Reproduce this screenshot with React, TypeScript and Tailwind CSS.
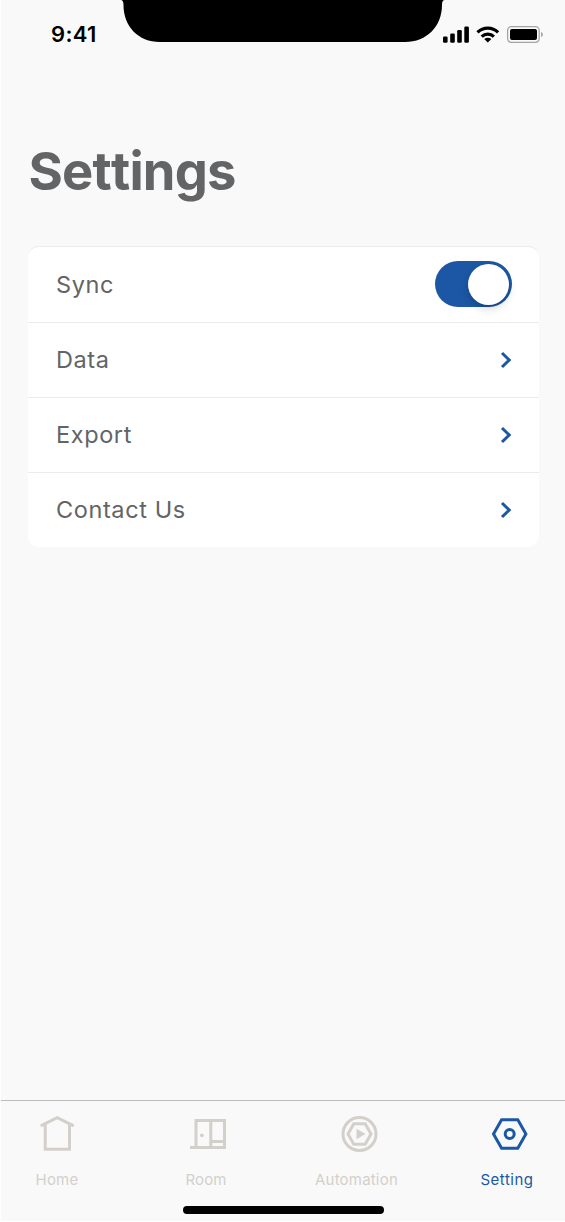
import type { ReactNode } from "react";

function StatusBar() {
  return (
    <header className="relative flex h-[68px] shrink-0 justify-between pl-[51px] pr-[21px]">
      <span className="mt-[20px] text-[22px] leading-[28px] font-semibold tracking-[0.35px] text-black">9:41</span>
      <svg className="absolute left-[120px] top-0" width="325" height="43" viewBox="0 0 325 43">
        <path d="M0 0H325C322.500 0 322 2 322 5C322 26 307 42 285 42H40C18 42 3.500 26 3.500 5C3.500 2 3 0 0 0Z" fill="#000" />
      </svg>
      <svg className="mt-[24px]" width="101" height="20" viewBox="443 24 101 20" fill="#000">
        <rect x="443" y="36.500" width="4.600" height="6.200" rx="1.300" />
        <rect x="450.200" y="33.500" width="4.600" height="9.200" rx="1.300" />
        <rect x="457.200" y="30" width="4.600" height="12.700" rx="1.300" />
        <rect x="464.300" y="26.500" width="4.600" height="16.200" rx="1.300" />
        <g fill="none" stroke="#000" strokeWidth="3.200">
          <path d="M477.500 32.300A14.700 14.700 0 0 1 498.100 32.300" />
          <path d="M481.700 36.600A8.800 8.800 0 0 1 493.900 36.600" />
        </g>
        <path d="M484.200 39.100Q487.800 36.300 491.400 39.100L487.800 42.600Z" />
        <rect x="507.600" y="26.700" width="31.600" height="15.600" rx="3.700" fill="none" stroke="#a5a5a5" strokeWidth="1.300" />
        <rect x="510" y="29" width="27" height="11" rx="1.900" />
        <path d="M541 31.900Q543 32.600 543 34.500T541 37.100Z" fill="#a5a5a5" />
      </svg>
    </header>
  );
}

function Row({ label, children }: { label: string; children: ReactNode }) {
  return (
    <li className="flex h-[75px] items-center justify-between border-b border-[#ebebeb] pl-[28px] pr-[27px] first:h-[76px] last:h-[74px] last:border-b-0">
      <span className="text-[23.5px] leading-[30px] tracking-[0.6px]">{label}</span>
      {children}
    </li>
  );
}

function Chevron() {
  return (
    <svg className="-mt-px" width="12" height="18" viewBox="0 0 12 18" fill="none" stroke="#1b57a4" strokeWidth="3">
      <path d="M2 2L9.200 9L2 16" />
    </svg>
  );
}

function Toggle() {
  return (
    <button aria-label="Sync" role="switch" aria-checked="true" className="-mt-px flex h-[46px] w-[77px] items-center justify-end overflow-visible rounded-full bg-[#1b57a4] pr-[3px]">
      <span className="h-[41px] w-[41px] rounded-full bg-white shadow-[0_4px_8px_rgba(0,0,0,0.15),0_2px_2px_rgba(0,0,0,0.08)]" />
    </button>
  );
}

function Tab({ label, className, children }: { label: string; className: string; children: ReactNode }) {
  return (
    <a className={`flex flex-col items-center ${className}`}>
      <svg className="overflow-visible" width="40" height="38" viewBox="0 0 40 38" fill="none" stroke="currentColor" strokeWidth="3">
        {children}
      </svg>
      <span className="mt-[17px] text-[15px] leading-[20px] whitespace-nowrap">{label}</span>
    </a>
  );
}

export default function App() {
  return (
    <div className="h-[1222px] w-[565px] bg-white pb-px font-['Inter',sans-serif]">
      <div className="relative flex h-full flex-col border-l border-white bg-[#f9f9f9] text-[#636466]">
        <div className="-ml-px flex h-full flex-col">
          <StatusBar />
          <h1 className="mt-[70px] ml-[28.5px] text-[52.5px] leading-[66px] font-bold tracking-[-0.8px] [font-kerning:none] [font-feature-settings:'calt'_0,'liga'_0]">Settings</h1>
          <ul className="mt-[42px] ml-[28px] mr-[26.5px] overflow-hidden rounded-[11px] border-t border-[#ebebeb] bg-white">
            <Row label="Sync"><Toggle /></Row>
            <Row label="Data"><Chevron /></Row>
            <Row label="Export"><Chevron /></Row>
            <Row label="Contact Us"><Chevron /></Row>
          </ul>
          <nav className="mt-auto ml-px flex h-[121px] shrink-0 border-t border-[#bcbcbc] pt-[14px] text-[#d3d0cb]">
            <Tab label="Home" className="w-[112px] tracking-[0.2px]">
              <path d="M3.700 10.800L20.200 2.700L36.700 10.800M8.200 9V34.200H32.500V9" />
            </Tab>
            <Tab label="Room" className="w-[186px] tracking-[0.1px]">
              <path d="M4 32.500H38.500V5.500H10V32.500M24.800 5.500V32.500M24.800 26.500H38.500" />
              <circle cx="15.900" cy="20.300" r="1.900" fill="currentColor" stroke="none" />
            </Tab>
            <Tab label="Automation" className="w-[115px] tracking-[0.2px]">
              <circle cx="22.500" cy="19" r="16.500" />
              <path d="M11 19L16.800 8.700H28.200L34 19L28.200 29.300H16.800Z" />
              <path d="M19.500 13.800V24.200L28.500 19Z" fill="currentColor" stroke="none" />
            </Tab>
            <Tab label="Setting" className="ml-[39px] w-[108px] tracking-[0.5px] text-[#1b57a4]">
              <path d="M6.500 19L14.600 4.800H30.800L38.900 19L30.800 33.200H14.600Z" />
              <circle cx="22.700" cy="19" r="4.500" />
            </Tab>
          </nav>
        </div>
        <div className="absolute bottom-[7px] left-[182px] h-[8px] w-[201px] rounded-full bg-black" />
      </div>
    </div>
  );
}
